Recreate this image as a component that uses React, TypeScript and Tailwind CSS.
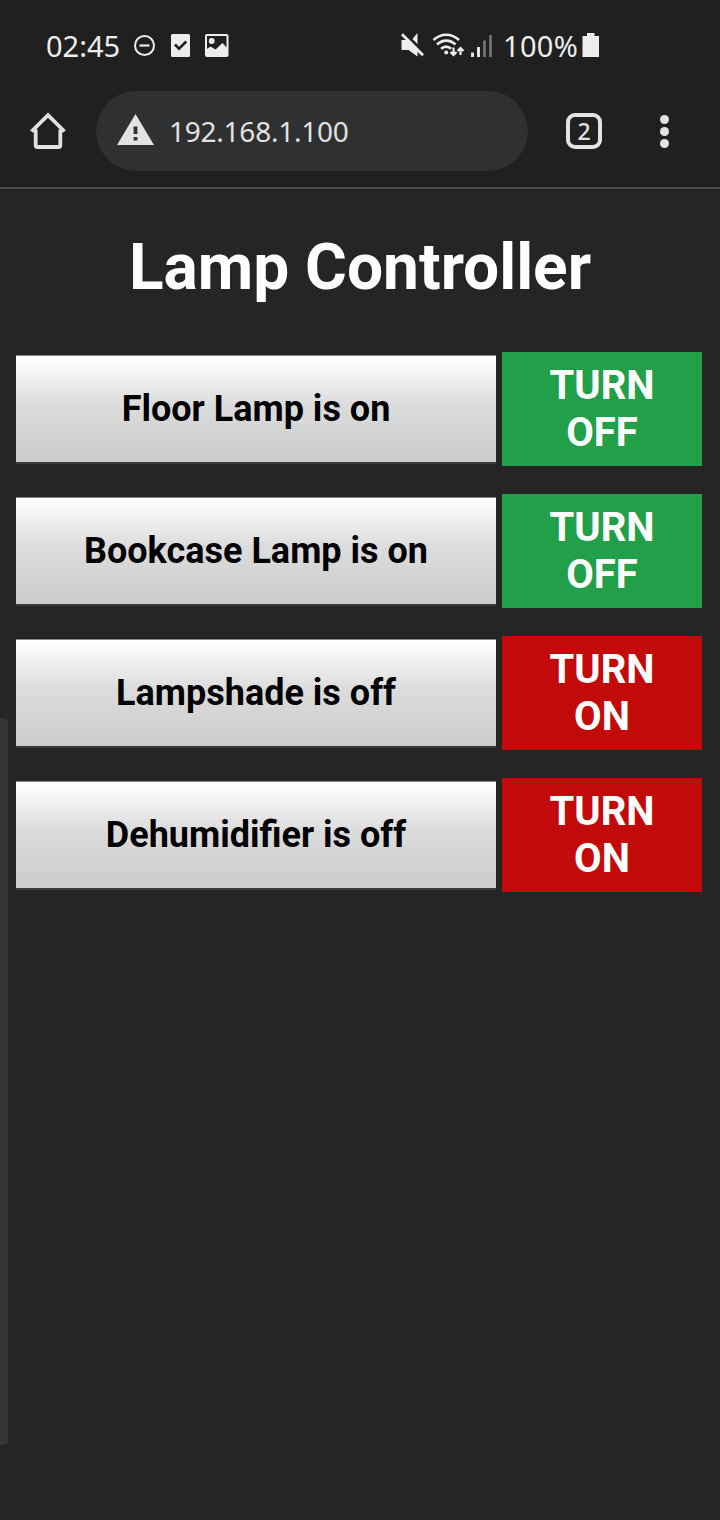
type Device = { label: string; on: boolean };

const devices: Device[] = [
  { label: "Floor Lamp is on", on: true },
  { label: "Bookcase Lamp is on", on: true },
  { label: "Lampshade is off", on: false },
  { label: "Dehumidifier is off", on: false },
];

function NoticeIcons() {
  return (
    <svg className="h-[30px] w-[100px] shrink-0" viewBox="0 0 100 30" fill="none">
      <circle cx="14.5" cy="15.500" r="9.500" stroke="#ededed" strokeWidth="2" />
      <path d="M9.500 15.500h10" stroke="#ededed" strokeWidth="2.200" />
      <rect x="41" y="4" width="19" height="23" rx="1.500" fill="#ededed" />
      <path d="M45 14.500l4 4.200 7.300-7.200" stroke="#202020" strokeWidth="2.600" />
      <rect x="76" y="5" width="21.500" height="21" rx="1" stroke="#ededed" strokeWidth="2" />
      <circle cx="81.700" cy="11" r="2.900" fill="#ededed" />
      <path d="M76 19.500l4.500-3 5 3 7-6.500 5 5.500v7.500H76z" fill="#ededed" />
    </svg>
  );
}

function SignalIcons() {
  return (
    <svg className="h-[30px] w-[96px] shrink-0" viewBox="0 0 96 30" fill="none">
      <path d="M1.500 10H8L12 9.500l5.500-6.500V26.500L8.500 20h-7z" fill="#ededed" />
      <path d="M4 2.700L25 23.500" stroke="#202020" strokeWidth="3" />
      <path d="M2 4.200L23 25.200" stroke="#ededed" strokeWidth="2.800" />
      <path d="M33.500 10c7.500-7 18-7 25.500 0M37 14.500c5.500-5.200 13-5.200 18.500 0M41 18.700c3.200-2.700 7-2.700 10.200 0" stroke="#ededed" strokeWidth="2.600" />
      <circle cx="46.200" cy="22.500" r="2" fill="#ededed" />
      <path d="M53.500 17.500v7M50.500 22l3 3 3-3M60.500 25v-7M57.500 21l3-3 3 3" stroke="#ededed" strokeWidth="2.200" />
      <path d="M72.500 22.500V27M78.500 17v10" stroke="#ededed" strokeWidth="2.800" />
      <path d="M84.500 10.500V27M90.500 5v22" stroke="#777" strokeWidth="2.600" />
    </svg>
  );
}

function StatusBar() {
  return (
    <div className="flex h-[91px] items-start pt-[30px] pl-[46px] font-['Noto_Sans',sans-serif] text-[29px] leading-[31px] text-[#ededed]">
      <span className="w-[84px] whitespace-nowrap">02:45</span>
      <NoticeIcons />
      <div className="w-[170px]" />
      <SignalIcons />
      <span className="ml-[7px] w-[79px] whitespace-nowrap tracking-[0.3px]">100%</span>
      <svg className="h-[30px] w-[18px] shrink-0" viewBox="0 0 18 30">
        <path d="M5 3h7.500v3H17v21H.5V6H5z" fill="#ededed" />
      </svg>
    </div>
  );
}

function Toolbar() {
  return (
    <div className="flex h-20 items-center">
      <svg className="ml-[28px] h-[40px] w-[40px] shrink-0" viewBox="0 0 40 40" fill="none">
        <path
          d="M3.500 20.500L20 4.200l16.500 16.300M7.700 18.500v15.700q0 1.800 1.800 1.800h21q1.800 0 1.800-1.800V18.500"
          stroke="#e2e2e2"
          strokeWidth="3.800"
        />
      </svg>
      <div className="ml-[28px] flex h-20 w-[432px] items-center rounded-full bg-[#2f3032]">
        <svg className="ml-[21px] h-[34px] w-[37px] shrink-0" viewBox="0 0 37 34">
          <path d="M18.500 0L37 31H0z" fill="#e2e2e2" />
          <path d="M18.500 12.500v7.500M18.500 23v3.600" stroke="#2f3032" strokeWidth="3.800" />
        </svg>
        <span className="ml-[15px] font-['Noto_Sans',sans-serif] text-[28px] leading-8 tracking-[-0.24px] text-[#e2e2e2]">
          192.168.1.100
        </span>
      </div>
      <div className="ml-[38px] flex size-9 items-center justify-center rounded-[9px] border-4 border-[#e2e2e2] pb-px font-['Noto_Sans',sans-serif] text-[23px] font-medium leading-7 text-[#e2e2e2]">
        2
      </div>
      <div className="ml-[57px] flex w-[10px] flex-col items-center gap-[3px]">
        <div className="size-[9px] rounded-full bg-[#e2e2e2]" />
        <div className="size-[9px] rounded-full bg-[#e2e2e2]" />
        <div className="size-[9px] rounded-full bg-[#e2e2e2]" />
      </div>
    </div>
  );
}

function DeviceRow({ label, on }: Device) {
  return (
    <div className="flex h-[114px] items-center gap-[6px]">
      <div className="mt-px flex h-[109px] w-[480px] items-center justify-center border-t border-b-2 border-t-[#8a8a8a] border-b-[#3a3a3a] bg-linear-to-b from-white from-3% via-[#dcdcdc] via-45% to-[#cbcbcb] bg-origin-border text-[36px] font-bold leading-[42px] text-black">
        {label}
      </div>
      <button
        className={`h-[114px] w-[200px] px-10 pb-[1px] text-center text-[40px] font-bold leading-[47px] text-white ${on ? "bg-[#22a049]" : "bg-[#c20a0a]"}`}
      >
        {on ? "TURN OFF" : "TURN ON"}
      </button>
    </div>
  );
}

export default function App() {
  return (
    <div className="relative h-[1520px] w-[720px] overflow-hidden bg-[#252525] font-[Roboto,sans-serif]">
      <header className="h-[189px] border-b-2 border-[#4a4a4a] bg-[#202020]">
        <StatusBar />
        <Toolbar />
      </header>
      <main className="pl-4">
        <h1 className="-ml-4 pt-[41px] text-center text-[64px] font-bold leading-[76px] text-white">Lamp Controller</h1>
        <div className="mt-[46px] flex flex-col gap-7">
          {devices.map((d) => (
            <DeviceRow key={d.label} {...d} />
          ))}
        </div>
      </main>
      <div className="absolute top-[718px] left-0 h-[727px] w-2 rounded-r bg-[#353535]" />
    </div>
  );
}
